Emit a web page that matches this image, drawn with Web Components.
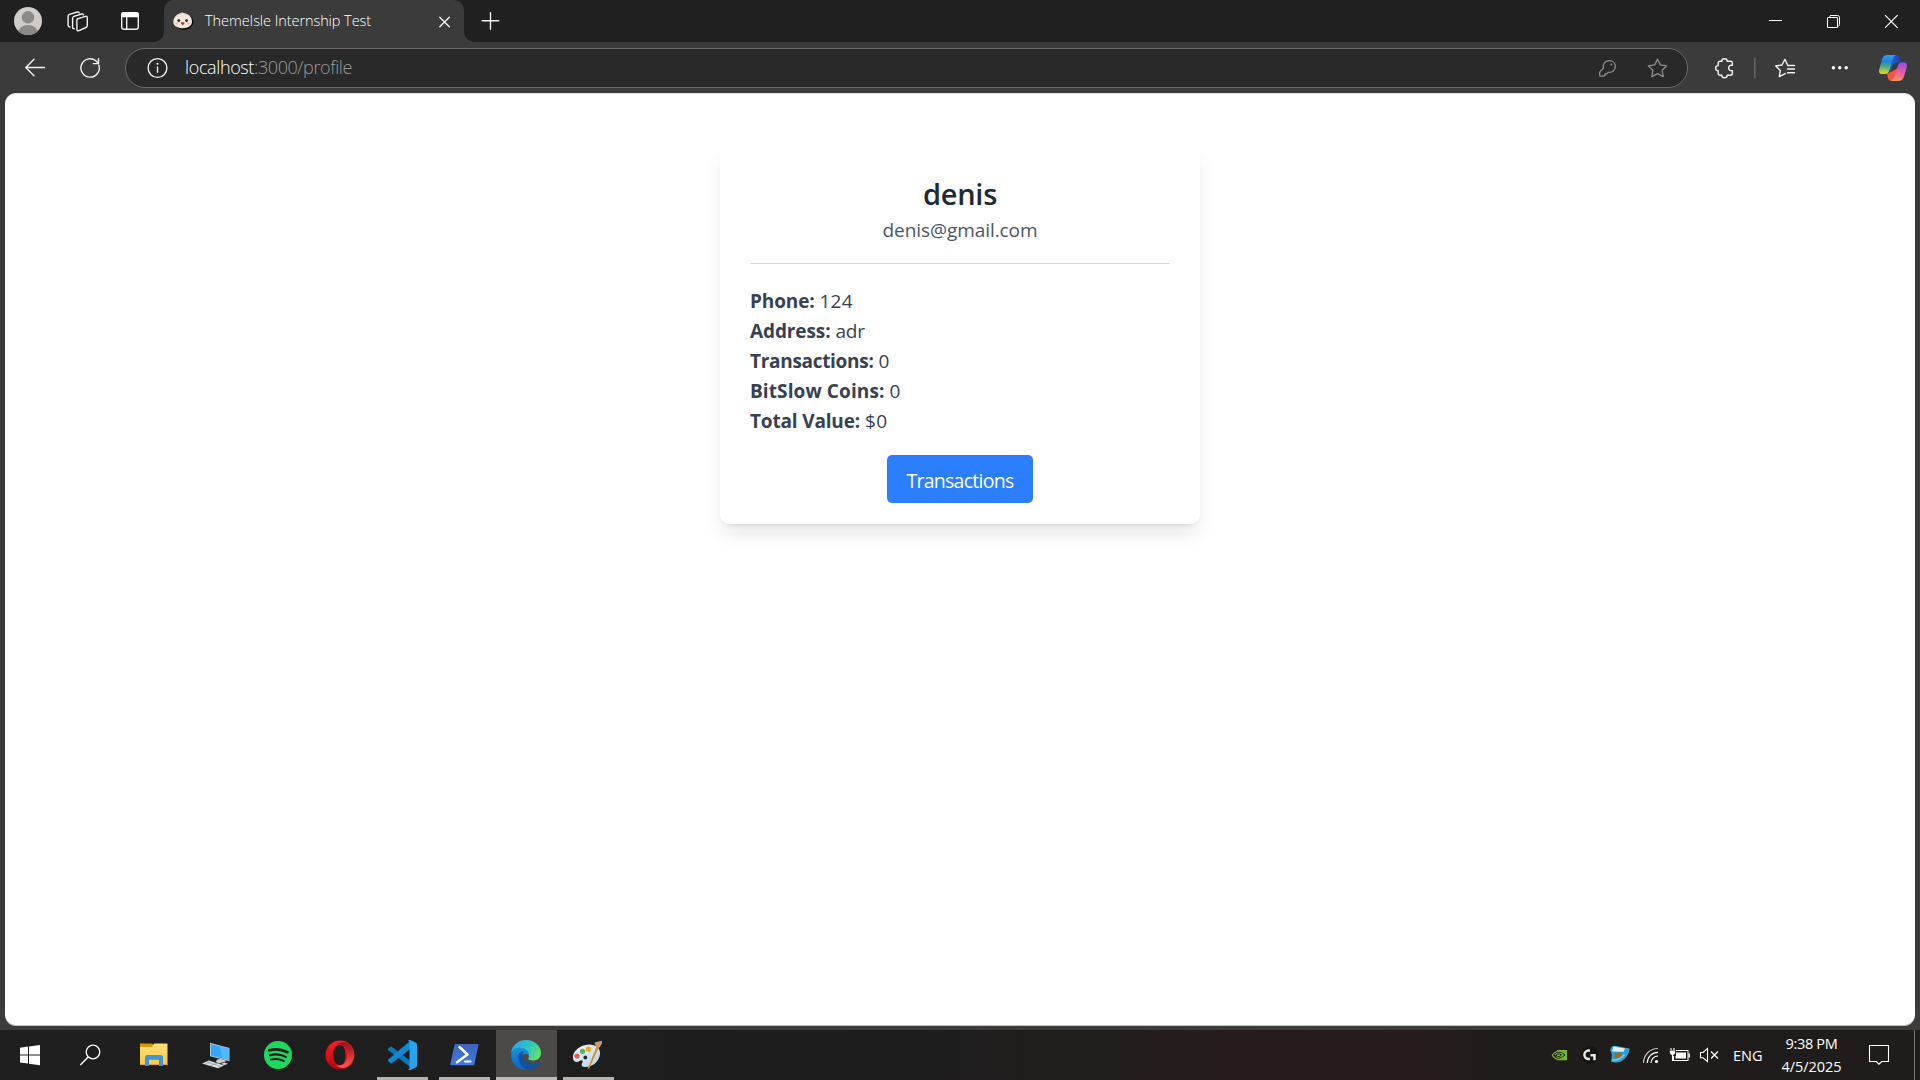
<!DOCTYPE html>
<html lang="en">
<head>
<meta charset="utf-8">
<title>ThemeIsle Internship Test</title>
<style>
html,body{margin:0;padding:0;width:1920px;height:1080px;overflow:hidden;background:#3b3b3b;font-family:"Open Sans","Noto Sans",sans-serif}
</style>
</head>
<body>
<desktop-screen></desktop-screen>
<script>
// Each glyph: [x, y, w, h, markup]; the box is the slice of its bar that the glyph occupies.
const W = 'fill="none" stroke="#f2f2f2" stroke-width="1.4" stroke-linecap="round" stroke-linejoin="round"';
const G = 'fill="none" stroke="#8f8f8f" stroke-width="1.3" stroke-linecap="round" stroke-linejoin="round"';
const GLYPHS = {
profile:[0,0,52,42,`<clipPath id="c"><circle cx="28" cy="21" r="14"/></clipPath><g clip-path="url(#c)"><rect x="13" y="6" width="30" height="30" fill="#cfcdca"/><circle cx="28" cy="17.3" r="6.2" fill="#8c8987"/><ellipse cx="28" cy="32.5" rx="9.8" ry="7.4" fill="#8c8987"/></g>`],
workspaces:[52,0,52,42,`<g ${W}><path d="M77.3 18.8 85.6 16.4Q87.3 16 87.3 17.6V25.6Q87.3 27 86 27.5L78.9 30.6Q76.9 31.3 76.9 29.3V20.2Q76.9 19 77.8 18.7Z"/><path d="M74.2 28.8Q72.6 29 72.6 27.4V18.2Q72.6 16.8 73.9 16.3L81.6 14Q83.4 13.6 83.4 15"/><path d="M70 27Q68.1 26.8 68.1 25.3V16.2Q68.1 14.8 69.4 14.3L77.4 12Q79 11.7 79.2 12.8"/></g>`],
tabs:[104,0,60,42,`<rect x="121.7" y="12.7" width="16.6" height="16.6" rx="2.6" ${W}/><path d="M121 17.3V15Q121 12 124 12H136Q139 12 139 15V17.3Z" fill="#fff"/><path d="M126.7 17V29" ${W}/>`],
bun:[164,0,40,42,`<ellipse cx="184" cy="22" rx="9.4" ry="7.8" fill="#060606"/><path d="M173.3 21.7C173.3 17 177.5 13.2 182.5 13C188 13 192 16.8 192 21.6C192 26 188 28.2 182.7 28.2S173.3 26 173.3 21.7Z" fill="#f3e9da"/><path d="M179 14.6 182.4 12.6 186 14.8" fill="none" stroke="#d9c8b0" stroke-width=".8"/><circle cx="178.8" cy="20.6" r="1.4" fill="#222"/><circle cx="186.6" cy="20.6" r="1.4" fill="#222"/><ellipse cx="176.9" cy="23.2" rx="1.5" ry="1" fill="#f3b6bd"/><ellipse cx="188.6" cy="23.2" rx="1.5" ry="1" fill="#f3b6bd"/><path d="M180.9 22.3H184.6Q184.4 25.2 182.7 25.2T180.9 22.3Z" fill="#c8263a"/>`],
tabclose:[424,0,40,42,`<path d="M439.8 17.3 449.3 26.8M449.3 17.3 439.8 26.8" ${W}/>`],
plus:[464,0,53,42,`<path d="M490.5 12.7V29.3M482.2 20.7H498.8" ${W}/>`],
min:[1740,0,58,42,`<path d="M1769 20.5H1782" stroke="#fff"/>`],
restore:[1798,0,60,42,`<path d="M1829.5 16.7Q1829.8 15.5 1831 15.5H1837.5Q1839.5 15.5 1839.5 17.5V24.5Q1839.5 26 1838.3 26.4" fill="none" stroke="#fff"/><rect x="1827.5" y="17.5" width="10" height="10" rx=".8" fill="none" stroke="#fff" stroke-width="1.1"/>`],
close:[1858,0,62,42,`<path d="M1885 15.2 1897.6 27.8M1897.6 15.2 1885 27.8" stroke="#fff" stroke-width="1.2"/>`],
back:[0,42,60,51,`<path d="M44.5 67.5H26M34 59.3 25.8 67.5 34 75.7" ${W}/>`],
refresh:[60,42,65,51,`<path d="M98.9 65.2A9.2 9.2 0 1 1 95.8 60.7L98.3 63.1M98.5 58.6V63.6H93.3" ${W}/>`],
info:[126,49,59,38,`<circle cx="157.5" cy="68" r="9.4" ${W}/><path d="M157.5 67V72.3" ${W}/><circle cx="157.5" cy="63.8" r="1" fill="#fff"/>`],
key:[1586,49,46,38,`<path d="M1603.4 68.2C1602.2 64.2 1605.3 60.7 1609.3 60.7C1612.8 60.7 1615.3 63.2 1615.3 66.5C1615.3 70.3 1612 73 1608.3 72.3L1606.8 73.9H1604.9V75.4L1604 76.1H1600.6Q1599.7 76.1 1599.7 75.2V72.6Q1599.7 71.9 1600.2 71.4Z" ${G}/><circle cx="1611.3" cy="64.5" r=".9" fill="#8f8f8f"/>`],
star:[1632,49,55,38,`<path d="M1657.5 59.2 1660.3 64.9 1666.7 65.9 1662.1 70.3 1663.2 76.7 1657.5 73.7 1651.8 76.7 1652.9 70.3 1648.3 65.9 1654.7 64.9Z" ${G}/>`],
puzzle:[1688,42,62,51,`<path d="M1721.8 61.3C1721.8 57.9 1727.2 57.9 1727.2 61.3H1730.4Q1732.4 61.3 1732.4 63.3V65.3C1727.4 64.3 1727.4 71.4 1732.4 70.6V73.2Q1732.4 75.2 1730.4 75.2H1727.2C1727.2 78.6 1721.8 78.6 1721.8 75.2H1720.2Q1718.2 75.2 1718.2 73.2V70.8C1714.8 70.8 1714.8 65.6 1718.2 65.6V63.3Q1718.2 61.3 1720.2 61.3Z" ${W}/>`],
divider:[1750,42,10,51,`<rect x="1754" y="58" width="1.6" height="20" fill="#646464"/>`],
favs:[1760,42,54,51,`<path d="M1794.5 65.5H1787.8L1784.9 59.3 1782 65 1775.7 66 1780.3 70.4 1779.3 76.6 1785.2 73.6M1787.5 69H1794.5M1787.5 72.7H1794.5" ${W}/>`],
dots:[1814,42,52,51,`<g fill="#fff"><circle cx="1833.4" cy="67.8" r="1.7"/><circle cx="1839.8" cy="67.8" r="1.7"/><circle cx="1846.2" cy="67.8" r="1.7"/></g>`],
copilot:[1866,42,54,51,`<defs><linearGradient id="a" x1="0" y1="0" x2="0" y2="1"><stop offset="0" stop-color="#2aa5f4"/><stop offset=".35" stop-color="#2080dd"/><stop offset=".65" stop-color="#54b66a"/><stop offset="1" stop-color="#f6d416"/></linearGradient><linearGradient id="b" x1=".5" y1="0" x2=".3" y2="1"><stop offset="0" stop-color="#a04df0"/><stop offset=".5" stop-color="#ec5a9c"/><stop offset="1" stop-color="#fb9a62"/></linearGradient><linearGradient id="e" x1="0" y1="0" x2="1" y2="0"><stop offset="0" stop-color="#1a6fd8"/><stop offset="1" stop-color="#1c3fc6"/></linearGradient></defs><path d="M1888 55H1895Q1898.400 55 1899.500 58L1900.800 62.500H1897Q1893.500 62.500 1892.500 66L1890 72Z" fill="url(#e)"/><path d="M1887 74 1888 78.500Q1889 81 1892 81H1898Q1895 80.500 1896 76L1898 68Z" fill="#f4553d"/><path d="M1887.500 55H1896Q1893.600 56 1892.500 60L1889 71.500Q1888 74 1885 74H1882Q1878.300 74 1879.200 69.500L1882.200 59Q1883.300 55 1887.500 55Z" fill="url(#a)"/><path d="M1898.400 81H1891Q1893.500 80 1894.500 76.500L1898 65.500Q1899 62.500 1901.500 62.500H1904Q1907.500 62.500 1906.800 67L1903.800 77Q1902.500 81 1898.400 81Z" fill="url(#b)"/>`],
start:[0,1030,60,50,`<path d="M20 1047.700 28 1046.600V1054.400H20ZM29 1046.400 40 1044.900V1054.400H29ZM20 1055.400H28V1063.600L20 1062.400ZM29 1055.400H40V1065.200L29 1063.700Z" fill="#fff"/>`],
search:[60,1030,64,50,`<circle cx="93" cy="1052" r="6.800" fill="none" stroke="#fff" stroke-width="1.300"/><path d="M88.200 1057 80.300 1064.900" stroke="#fff" stroke-width="1.400"/>`],
folder:[1,0,61,50,`<defs><linearGradient id="a" x2="0" y2="1"><stop stop-color="#ffdf7a"/><stop offset="1" stop-color="#f9c847"/></linearGradient></defs><path d="M17 13.500H28.500Q30 13.500 30.500 15L31.500 17H17Z" fill="#dc9a05"/><path d="M17 17H29L31 13.500H44.500V35H17Z" fill="url(#a)"/><path d="M17 34H44.500V35H17Z" fill="#e0a52a"/><path d="M22 36V27.500Q22 25 24.500 25H37.500Q40 25 40 27.500V36H36V29.800H26V36Z" fill="#3f94dc"/>`],
pc:[1,0,61,50,`<path d="M25 12.800 44.500 18V31.300L25 26.300Z" fill="#a9c6d6"/><path d="M26 14 43.600 18.700V30L26 25.500Z" fill="#35a7fb"/><path d="M34 16.100 43.600 18.700V30L38 28.500Z" fill="#55b9ff"/><path d="M32 29.500 36 29 42 31 34 33.500 31 32Z" fill="#c8d0d5"/><path d="M17 33.500 24 30.500 39 35.500 33 38.300Z" fill="#dce1e4"/><path d="M22 32 37 37M20 34.500 27 31.500M25 36 32 33" stroke="#84919a" stroke-width=".6"/><path d="M36 33.800 39.500 32.600 43 33.800 39 35.300Z" fill="#cfd6da"/>`],
spotify:[1,0,61,50,`<circle cx="31" cy="25" r="14" fill="#1ed760"/><g fill="none" stroke="#191919" stroke-linecap="round"><path d="M22.200 20.300Q32 17.700 40.500 22.200" stroke-width="2.700"/><path d="M23 25.200Q31.500 22.900 38.700 26.900" stroke-width="2.200"/><path d="M23.800 29.600Q31 27.900 37 31.100" stroke-width="1.800"/></g>`],
opera:[1,0,61,50,`<defs><linearGradient id="a" x2="0" y2="1"><stop stop-color="#ff1b2d"/><stop offset="1" stop-color="#b0050f"/></linearGradient><linearGradient id="b" x2="0" y2="1"><stop stop-color="#a00a10"/><stop offset="1" stop-color="#ff5a52"/></linearGradient></defs><path fill-rule="evenodd" d="M31 10.500A14.500 14.500 0 1 0 31 39.500A14.500 14.500 0 1 0 31 10.500ZM31 14.500C35 14.500 36.500 20 36.500 25S35 35 31 35S24 30 24 25S27 14.500 31 14.500Z" fill="url(#a)"/><path d="M27 15.500C31 11 37 11.500 40 14.500C47 20 47 30 40 35.500C36 39 31 38.500 27 35C35 37 38 31 38 25S35 13 27 15.500Z" fill="url(#b)"/>`],
vscode:[1,0,61,50,`<path d="M17.200 18.500 19.500 16.700Q20.200 16.300 21 16.900L39 30.500V37L17.300 20.300Q16.200 19.300 17.200 18.500Z" fill="#0a78bd"/><path d="M17.200 31.200 19.500 33.200Q20.200 33.700 21 33.100L39 19.300V11L17.300 29.500Q16.200 30.300 17.200 31.200Z" fill="#1089d3"/><path d="M39.300 10.100 45 12.800Q46 13.300 46 14.500V35.500Q46 36.700 45 37.200L39.300 39.900Q37.800 40.300 36.800 39.300Q38.300 39.500 38.500 38V12Q38.300 10.500 36.800 10.700Q37.800 9.700 39.300 10.100Z" fill="#26a5ee"/>`],
powershell:[1,0,61,50,`<defs><linearGradient id="a" x2="0" y2="1"><stop stop-color="#3a66bd"/><stop offset="1" stop-color="#4478dd"/></linearGradient></defs><path d="M22.300 14H45Q45.700 14 45.500 14.800L41.300 34.500Q41.100 35.300 40.400 35.300H17.800Q17.100 35.300 17.300 34.500L21.500 14.800Q21.700 14 22.300 14Z" fill="url(#a)"/><path d="M26.500 17 34.500 24.500 24 32.200" fill="none" stroke="#fff" stroke-width="2.500" stroke-linecap="round" stroke-linejoin="round"/><path d="M32 31.500H37.500" stroke="#fff" stroke-width="2.200" stroke-linecap="round"/>`],
edge:[0,0,61,50,`<defs><linearGradient id="a" x1="0" x2="1" y1=".3" y2=".7"><stop stop-color="#2ba8e0"/><stop offset=".5" stop-color="#2fc3c9"/><stop offset="1" stop-color="#67e35a"/></linearGradient><linearGradient id="b" x2="0" y2="1"><stop stop-color="#1494df"/><stop offset="1" stop-color="#0b63b9"/></linearGradient></defs><path d="M15.200 22C16.500 14.500 23 10 30 10C39 10 45 16.500 45 23C45 28 41 30.500 37 30.500C34 30.500 32 29.500 32.300 28.500C34 26.500 33 21.500 28 20Z" fill="url(#a)"/><path d="M15 25C15 20 19 17.500 23.500 17.500C30 17.500 33.500 22 33 26C32 23.500 29 23 27 25C24 29 28 38 36 38.300Q33 40 29.500 40C21 40 15 33 15 25Z" fill="url(#b)"/><path d="M22.500 26C22.500 23 25 21.300 28 21.500C25.500 23 26 32 35 33.800C39 34.500 41.500 33 43.500 32C45 31.500 44.500 33 43.500 34C41 37.500 37 39.500 33 39.500C26 39 22.500 32.500 22.500 26Z" fill="#10529b"/>`],
paint:[1,0,61,50,`<defs><linearGradient id="a" x2="1" y2="1"><stop stop-color="#f4fbff"/><stop offset="1" stop-color="#a9d3ea"/></linearGradient></defs><path d="M16 28.500C15 21 23 15 32 14.500C39 14.500 43.500 18 43 24C42.500 31 36 37 28 37C23.500 37 24.500 34 25.500 32.500C26.500 30.500 24.500 29.500 22.500 31C20 32.800 16.500 32 16 28.500Z" fill="url(#a)"/><circle cx="20" cy="26" r="2.600" fill="#e8564e"/><circle cx="25.500" cy="21.300" r="2.600" fill="#5fb54a"/><circle cx="31.500" cy="19.200" r="2.700" fill="#f7a51b"/><circle cx="28.300" cy="27.500" r="1.900" fill="#1d2a33"/><path d="M40 15.500 42 17 32.500 38 30.500 39Z" fill="#e58a28"/><path d="M37.500 12.500Q42 11.500 45 10.800Q45.500 14 42 18L39 16.800Z" fill="#c79f6c"/>`],
nvidia:[1542,1030,36,50,`<path d="M1557 1050H1567V1060.300H1557Z" fill="#76b82a"/><path d="M1552.300 1055Q1556 1050.300 1561 1051.500Q1564 1052.500 1565 1054.800Q1562 1059.500 1557.500 1059.300Q1554 1058.500 1552.300 1055ZM1555 1055Q1558 1051.800 1562 1055Q1559 1058.500 1556.500 1056.500" fill="none" stroke="#76b82a" stroke-width="1.100"/><path d="M1557 1052.200Q1562 1051.500 1565 1054.800Q1562 1058.600 1557 1058.500M1557 1054.200Q1560 1053.500 1561.500 1055Q1560 1057 1557.500 1056.500" fill="none" stroke="#1c2e10" stroke-width="1"/>`],
ghub:[1578,1030,26,50,`<circle cx="1590" cy="1055" r="9" fill="#151515"/><path d="M1590 1050.600H1588.600A4.200 4.200 0 0 0 1588.600 1059H1590M1590.500 1055.300H1594.500V1060.300" fill="none" stroke="#e8e8e8" stroke-width="2.500"/>`],
app:[1604,1030,34,50,`<path d="M1612 1046.300Q1616 1045 1619 1046.500L1629.800 1048.500Q1628.500 1057 1621 1061.500Q1616 1063.500 1611 1061.800Q1613 1054 1610 1050Z" fill="#2b9fd4"/><path d="M1613.500 1046.500 1625 1048.500 1623.500 1051.800 1612 1051.500Z" fill="#e2edf6"/><path d="M1613.500 1053.500 1621 1052.500 1622 1057 1615.500 1058.500Z" fill="#9a6c24"/><path d="M1612 1060Q1619 1061 1624.500 1054.500" stroke="#72d3ee" fill="none" stroke-width="1.400"/>`],
wifi:[1638,1030,26,50,`<g fill="none" stroke="#fff" stroke-width="1.200"><path d="M1643.500 1063A14.500 14.500 0 0 1 1658 1048.500" stroke="#bdbdbd"/><path d="M1647.300 1063A10.700 10.700 0 0 1 1658 1052.300"/><path d="M1651 1063A7 7 0 0 1 1658 1056"/></g><circle cx="1656.500" cy="1061.500" r="1.600" fill="#fff"/>`],
battery:[1664,1030,32,50,`<rect x="1673.500" y="1050.500" width="14.500" height="10" fill="none" stroke="#fff"/><rect x="1675.500" y="1052.500" width="10.500" height="6" fill="#fff"/><rect x="1688.500" y="1053.500" width="1.500" height="4" fill="#fff"/><path d="M1669.500 1047.500H1676V1056H1669.500Z" fill="#1f1d1d"/><path d="M1671 1048V1050M1674 1048V1050M1672.500 1054V1060.500H1674" stroke="#fff" stroke-width="1.100" fill="none"/><path d="M1669.800 1050.500H1675.200V1052Q1675 1055 1672.500 1055T1669.800 1052Z" fill="#fff"/>`],
mute:[1696,1030,36,50,`<path d="M1700.500 1052.500H1703L1707.500 1048.500V1061.500L1703 1057.800H1700.500Z" fill="none" stroke="#fff" stroke-width="1.100"/><path d="M1711 1051.500 1718 1058.500M1718 1051.500 1711 1058.500" stroke="#fff" stroke-width="1.200"/>`],
notif:[1854,1030,60,50,`<path d="M1869.500 1045.500H1888.500V1061.500H1881.700L1879 1064.200 1876.300 1061.500H1869.500Z" fill="none" stroke="#fff" stroke-width="1.100"/>`]
};

class GlyphIcon extends HTMLElement{
  connectedCallback(){
    const [x,y,w,h,m]=GLYPHS[this.getAttribute('name')];
    this.attachShadow({mode:'open'}).innerHTML=`<style>:host{display:block;flex:none;width:${w}px;height:${h}px}svg{display:block}</style><svg width="${w}" height="${h}" viewBox="${x} ${y} ${w} ${h}">${m}</svg>`;
  }
}
customElements.define('glyph-icon',GlyphIcon);

// Text run that tracks its letters so that it spans the given width.
class FitText extends HTMLElement{
  connectedCallback(){
    const w=+this.getAttribute('width');
    const r=this.attachShadow({mode:'open'});
    r.innerHTML=`<style>:host{display:inline-block;width:${w}px;white-space:nowrap}</style><span><slot></slot></span>`;
    const s=r.querySelector('span');
    s.style.letterSpacing='0px';
    const n=this.textContent.length;
    s.style.letterSpacing=((w-s.getBoundingClientRect().width)/n).toFixed(3)+'px';
  }
}
customElements.define('fit-text',FitText);

const define=(name,css,html)=>customElements.define(name,class extends HTMLElement{
  constructor(){super();this.attachShadow({mode:'open'}).innerHTML=`<style>${css}</style>${html}`}
});

define('browser-tab',`
:host{display:flex;position:relative;width:300px;height:42px;background:#3b3b3b;border-radius:10px 10px 0 0;flex:none}
:host::before,:host::after{content:"";position:absolute;bottom:0;width:10px;height:10px}
:host::before{left:-10px;background:radial-gradient(circle at 0 0,transparent 9.5px,#3b3b3b 10px)}
:host::after{right:-10px;background:radial-gradient(circle at 100% 0,transparent 9.5px,#3b3b3b 10px)}
.t{flex:1;font-size:14.5px;line-height:20px;padding:11px 0 0 1px;color:#fff;font-weight:300;height:20px}
`,`<glyph-icon name="bun"></glyph-icon><div class="t"><fit-text width="166">ThemeIsle Internship Test</fit-text></div><glyph-icon name="tabclose"></glyph-icon>`);

define('title-bar',`:host{display:flex;height:42px;background:#202020}.s{flex:1}`,
`<glyph-icon name="profile"></glyph-icon><glyph-icon name="workspaces"></glyph-icon><glyph-icon name="tabs"></glyph-icon><browser-tab></browser-tab><glyph-icon name="plus"></glyph-icon><div class="s"></div><glyph-icon name="min"></glyph-icon><glyph-icon name="restore"></glyph-icon><glyph-icon name="close"></glyph-icon>`);

define('address-bar',`
:host{display:flex;box-sizing:border-box;width:1563px;height:40px;margin-top:6px;border:1px solid #6a6a6a;border-radius:20px;background:#292929;flex:none}
.u{flex:1;font-size:18px;line-height:37px;font-weight:300;color:#fff;white-space:nowrap;display:flex}
.p{color:#9b9b9b}
`,`<glyph-icon name="info"></glyph-icon><div class="u"><fit-text width="69">localhost</fit-text><fit-text class="p" width="98">:3000/profile</fit-text></div><glyph-icon name="key"></glyph-icon><glyph-icon name="star"></glyph-icon>`);

define('tool-bar',`:host{display:flex;height:51px;background:#3b3b3b}`,
`<glyph-icon name="back"></glyph-icon><glyph-icon name="refresh"></glyph-icon><address-bar></address-bar><glyph-icon name="puzzle"></glyph-icon><glyph-icon name="divider"></glyph-icon><glyph-icon name="favs"></glyph-icon><glyph-icon name="dots"></glyph-icon><glyph-icon name="copilot"></glyph-icon>`);

customElements.define('detail-row',class extends HTMLElement{
  connectedCallback(){
    const a=k=>this.getAttribute(k);
    this.attachShadow({mode:'open'}).innerHTML=`<style>:host{display:block;height:30px;line-height:30px;font-size:19px;color:#364153;white-space:nowrap}b{font-weight:700}</style><b><fit-text width="${a('lw')}">${a('label')}</fit-text></b> <fit-text width="${a('vw')}">${a('value')}</fit-text>`;
  }
});

define('profile-card',`
:host{display:block;box-sizing:border-box;width:480px;height:381px;margin:49px auto 0;padding:30px;border-radius:10px;background:#fff;box-shadow:0 12.5px 18.75px -3.75px rgba(0,0,0,.1),0 5px 7.5px -5px rgba(0,0,0,.1);text-align:center}
header{border-bottom:1px solid #d1d5dc;padding-bottom:18px}
h2{margin:0;padding-top:1px;font-size:29px;line-height:40px;height:40px;font-weight:600;color:#1e2939}
p{margin:0;padding-top:1px;font-size:19px;line-height:30px;height:30px;color:#4a5565}
section{padding-top:22px;text-align:left}
.a{margin-top:19px;display:flex;justify-content:center}
button{all:unset;box-sizing:border-box;width:146px;height:48px;border-radius:5px;background:#2b7fff;color:#fff;font-size:19.5px;line-height:51px;text-align:center}
`,`<header><h2><fit-text width="74">denis</fit-text></h2><p><fit-text width="155">denis@gmail.com</fit-text></p></header>
<section><detail-row label="Phone:" lw="64.500" value="124" vw="33.500"></detail-row><detail-row label="Address:" lw="80.500" value="adr" vw="29.500"></detail-row><detail-row label="Transactions:" lw="123.500" value="0" vw="12"></detail-row><detail-row label="BitSlow Coins:" lw="134.500" value="0" vw="12"></detail-row><detail-row label="Total Value:" lw="110" value="$0" vw="22.500"></detail-row></section>
<div class="a"><button><fit-text width="107">Transactions</fit-text></button></div>`);

define('web-page',`:host{display:flow-root;box-sizing:border-box;width:1910px;height:933px;margin:0 auto;background:#fff;border-top:1px solid #e0e0e0;border-bottom:1px solid #c4c6c6;border-radius:11px;overflow:hidden}`,`<profile-card></profile-card>`);

customElements.define('task-button',class extends HTMLElement{
  connectedCallback(){
    this.attachShadow({mode:'open'}).innerHTML=`<style>:host{display:flex;position:relative;width:61px;height:50px;margin-right:1px;flex:none}:host([active]){background:#4b4a49}
    :host([open])::after{content:"";position:absolute;left:5px;right:5px;bottom:0;height:3px;background:#b4b3b2}:host([active])::after{left:0;right:0;background:#bdbcbb}</style><glyph-icon name="${this.getAttribute('icon')}"></glyph-icon>`;
  }
});

define('task-bar',`
:host{display:flex;height:50px;background:linear-gradient(90deg,#1f1f1f 0,#1e1d1e 48%,#211d1b 58%,#261b1c 64%,#261b1d 74%,#1f1c1b 78%,#1f1d1c 100%);color:#fff;font-size:14.500px}
.s{flex:1}
.lang{width:30px;padding-left:1px;line-height:51px;flex:none}
.clock{width:91px;box-sizing:border-box;padding:2px 0 0 6px;display:flex;flex-direction:column;align-items:center;line-height:23px;flex:none}
.edge{width:1px;background:#777;margin-right:5px;flex:none}
`,`<glyph-icon name="start"></glyph-icon><glyph-icon name="search"></glyph-icon>
<task-button icon="folder"></task-button><task-button icon="pc"></task-button><task-button icon="spotify"></task-button><task-button icon="opera"></task-button><task-button icon="vscode" open></task-button><task-button icon="powershell" open></task-button><task-button icon="edge" open active></task-button><task-button icon="paint" open></task-button>
<div class="s"></div>
<glyph-icon name="nvidia"></glyph-icon><glyph-icon name="ghub"></glyph-icon><glyph-icon name="app"></glyph-icon><glyph-icon name="wifi"></glyph-icon><glyph-icon name="battery"></glyph-icon><glyph-icon name="mute"></glyph-icon>
<div class="lang"><fit-text width="29.500">ENG</fit-text></div>
<div class="clock"><fit-text width="52">9:38 PM</fit-text><fit-text width="60">4/5/2025</fit-text></div>
<glyph-icon name="notif"></glyph-icon><div class="edge"></div>`);

define('desktop-screen',`:host{display:flex;flex-direction:column;width:1920px;height:1080px;background:#3b3b3b}.g{flex:1}`,
`<title-bar></title-bar><tool-bar></tool-bar><web-page></web-page><div class="g"></div><task-bar></task-bar>`);
</script>
</body>
</html>
